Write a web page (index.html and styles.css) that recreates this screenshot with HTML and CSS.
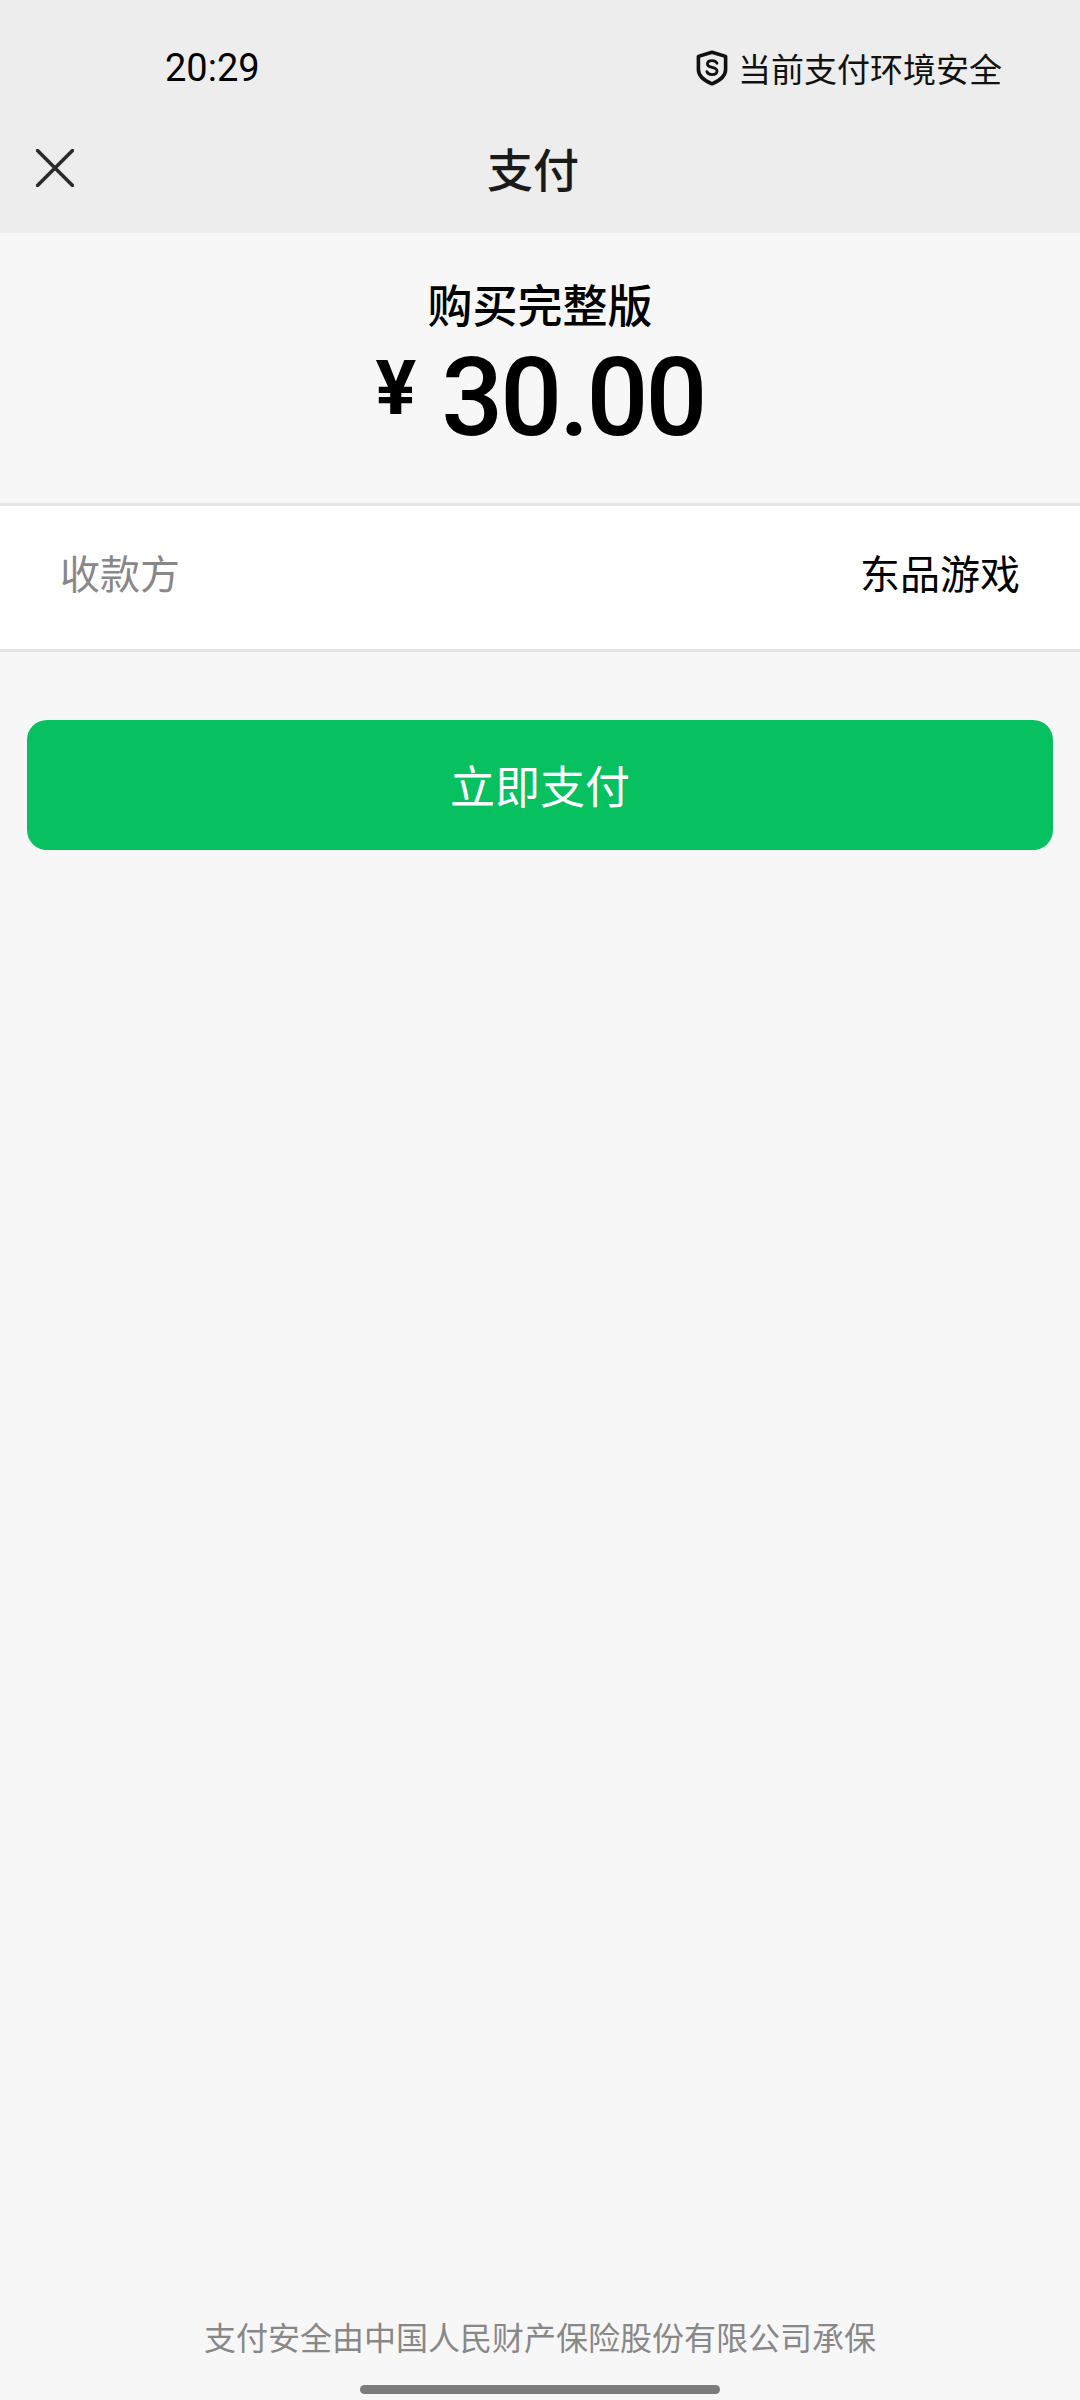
FILE: index.html
```html
<!DOCTYPE html>
<html lang="zh-CN">
<head>
  <meta charset="UTF-8">
  <meta name="viewport" content="width=device-width, initial-scale=1.0">
  <title>支付</title>
  <link rel="stylesheet" href="styles.css">
</head>
<body class="pay-body">

<div class="pay-page">
  <!-- header -->
  <div class="pay-header">
    <div class="pay-status">
      <span class="pay-time">20:29</span>
      <span class="pay-safe">
        <svg class="pay-shield" viewBox="0 0 32 36" width="32" height="36">
          <path d="M16 2.2 L29.6 6.4 V19.5 C29.6 26 24 30.6 16 33.8 C8 30.6 2.4 26 2.4 19.5 V6.4 Z" fill="none" stroke="#111" stroke-width="3.6" stroke-linejoin="round"/>
          <path d="M21 13.2 C20 11.2 18.2 10.6 16 10.6 C13.4 10.6 11.4 11.8 11.4 14 C11.4 18.6 21 16.2 21 21 C21 23.4 18.8 24.6 16 24.6 C13.6 24.6 11.6 23.8 10.8 21.6" fill="none" stroke="#111" stroke-width="2.8" stroke-linecap="round"/>
        </svg>
        <span class="pay-safe-text">当前支付环境安全</span>
      </span>
    </div>
    <div class="pay-nav">
      <svg class="pay-close" viewBox="0 0 38 38" width="38" height="38">
        <path d="M1.5 1.5 L36.5 36.5 M36.5 1.5 L1.5 36.5" stroke="#2b2b2b" stroke-width="3.6" stroke-linecap="round"/>
      </svg>
      <div class="pay-title">支付</div>
    </div>
  </div>

  <!-- content -->
  <div class="pay-summary">
    <div class="pay-product">购买完整版</div>
    <div class="pay-amount">
      <span class="pay-currency">¥</span>
      <span class="pay-number">30.00</span>
    </div>
  </div>

  <div class="pay-row">
    <span class="pay-row-label">收款方</span>
    <span class="pay-row-value">东品游戏</span>
  </div>

  <div class="pay-btn">立即支付</div>

  <!-- footer -->
  <div class="pay-footer">
    <div class="pay-note">支付安全由中国人民财产保险股份有限公司承保</div>
    <div class="pay-home-bar"></div>
  </div>
</div>

</body>
</html>
```

FILE: styles.css
```css
/* base */
.pay-body {
  margin: 0;
  padding: 0;
  background: #f7f7f7;
  font-family: "Noto Sans CJK SC", "Noto Sans", sans-serif;
}

.pay-page {
  display: flex;
  flex-direction: column;
  width: 1080px;
  height: 2400px;
  overflow: hidden;
}

/* header */
.pay-header {
  height: 233px;
  background-color: #ededed;
}

.pay-status {
  display: flex;
  justify-content: space-between;
  align-items: center;
  height: 48px;
  padding: 44px 78px 0 165px;
}

.pay-time {
  font-family: Roboto, sans-serif;
  font-size: 38px;
  font-weight: 400;
  line-height: 48px;
  color: #000;
}

.pay-safe {
  display: flex;
  align-items: center;
  gap: 10px;
}

.pay-shield {
  display: block;
}

.pay-safe-text {
  font-size: 33px;
  line-height: 46px;
  color: #111;
}

.pay-nav {
  display: grid;
  grid-template-columns: 1fr auto 1fr;
  align-items: center;
  height: 60px;
  margin-top: 46px;
  padding: 0 50px 0 36px;
}

.pay-close {
  display: block;
}

.pay-title {
  font-size: 46px;
  font-weight: 500;
  line-height: 58px;
  margin-bottom: 2px;
  color: #1a1a1a;
}

/* summary */
.pay-summary {
  display: flex;
  flex-direction: column;
  align-items: center;
  height: 270px;
}

.pay-product {
  margin-top: 41px;
  font-size: 45px;
  font-weight: 500;
  line-height: 60px;
  color: #000;
}

.pay-amount {
  display: flex;
  align-items: flex-start;
  gap: 25px;
  height: 110px;
  margin-top: 9px;
  color: #000;
}

.pay-currency {
  font-family: Roboto, sans-serif;
  font-size: 76px;
  font-weight: 700;
  line-height: 90px;
}

.pay-number {
  font-family: Roboto, sans-serif;
  font-size: 109px;
  font-weight: 500;
  line-height: 110px;
  letter-spacing: -3px;
}

/* row */
.pay-row {
  display: flex;
  justify-content: space-between;
  align-items: center;
  height: 131px;
  padding: 0 60px 12px 60px;
  background-color: #fff;
  border-top: 3px solid #e5e5e5;
  border-bottom: 3px solid #e5e5e5;
}

.pay-row-label {
  font-size: 40px;
  color: #888;
}

.pay-row-value {
  font-size: 40px;
  color: #000;
}

/* button */
.pay-btn {
  height: 130px;
  margin: 68px 27px 0 27px;
  border-radius: 20px;
  background-color: #07c160;
  font-size: 45px;
  line-height: 130px;
  text-align: center;
  color: #fff;
}

/* footer */
.pay-footer {
  display: flex;
  flex-direction: column;
  align-items: center;
  margin-top: auto;
  padding-bottom: 6px;
}

.pay-note {
  font-size: 32px;
  line-height: 44px;
  color: #888;
}

.pay-home-bar {
  width: 360px;
  height: 9px;
  margin-top: 27px;
  border-radius: 5px;
  background-color: #7b7b7b;
}
```
